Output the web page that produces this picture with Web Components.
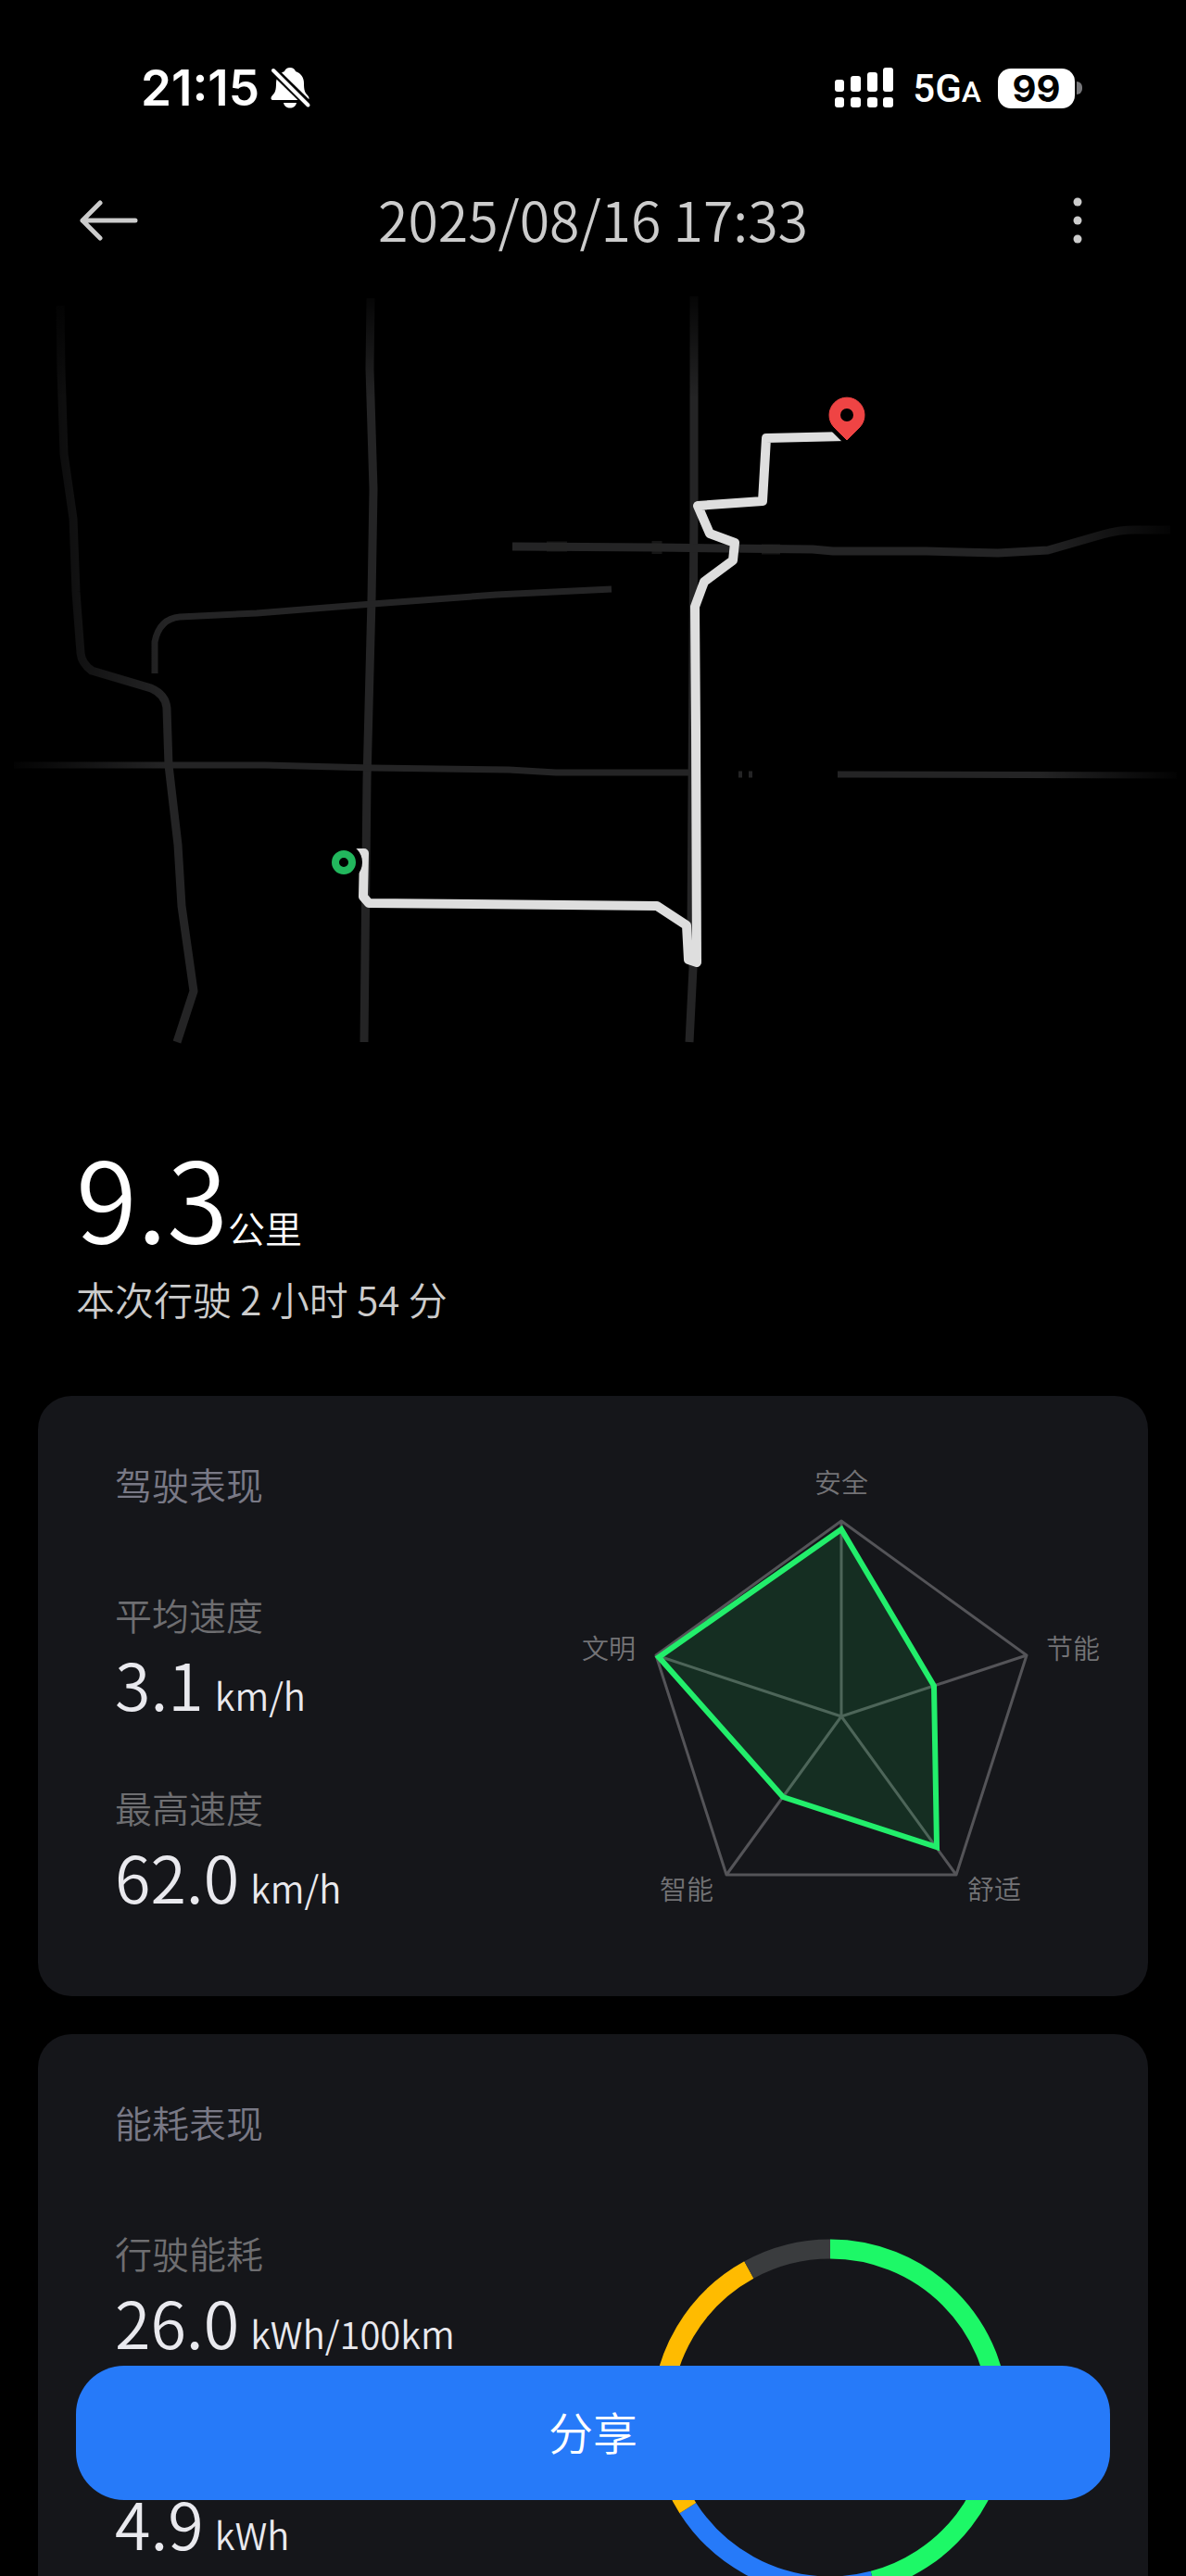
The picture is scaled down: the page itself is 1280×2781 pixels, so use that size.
<!DOCTYPE html>
<html lang="zh-CN">
<head>
<meta charset="utf-8">
<meta name="viewport" content="width=device-width, initial-scale=1">
<title>行程详情</title>
<style>
  :root {
    --bg: #000000;
    --card: #15161a;
    --green: #1df867;
    --blue: #267af9;
    --yellow: #ffbb00;
    --grey: #3a3c3e;
  }
  body {
    margin: 0;
    background: var(--bg);
    color: #ffffff;
    font-family: "Noto Sans CJK SC", sans-serif;
    font-weight: 350;
  }
</style>
</head>
<body>
<trip-page>
  <status-bar slot="top" time="21:15" battery="99"></status-bar>
  <trip-header slot="top">2025/08/16 17:33</trip-header>
  <trip-map></trip-map>
  <trip-summary value="9.3" unit="公里">本次行驶 2 小时 54 分</trip-summary>
  <trip-card heading="驾驶表现">
    <trip-metric label="平均速度" value="3.1" unit="km/h"></trip-metric>
    <trip-metric label="最高速度" value="62.0" unit="km/h"></trip-metric>
    <radar-chart slot="chart"></radar-chart>
  </trip-card>
  <trip-card heading="能耗表现" class="roomy">
    <trip-metric label="行驶能耗" value="26.0" unit="kWh/100km"></trip-metric>
    <trip-metric value="4.9" unit="kWh"></trip-metric>
    <donut-chart slot="chart"></donut-chart>
  </trip-card>
  <share-button slot="action">分享</share-button>
</trip-page>

<script>
// Attaches an open shadow root holding the given markup.
function render(host, html) {
  if (host.shadowRoot) return;
  host.attachShadow({ mode: 'open' }).innerHTML = html;
}

class TripPage extends HTMLElement {
  connectedCallback() {
    render(this, `
      <style>
        :host { display: block; position: relative; height: 100vh; overflow: hidden; }
        main { height: 100%; overflow-y: auto; scrollbar-width: none; }
        .action { position: absolute; left: 82px; right: 82px; bottom: 82px; }
      </style>
      <main>
        <slot name="top"></slot>
        <slot></slot>
      </main>
      <div class="action"><slot name="action"></slot></div>
    `);
  }
}

class StatusBar extends HTMLElement {
  connectedCallback() {
    render(this, `
      <style>
        :host {
          display: flex;
          align-items: center;
          justify-content: space-between;
          height: 190px;
          padding: 0 112px 0 152px;
          box-sizing: border-box;
          font-family: Inter, sans-serif;
        }
        svg { display: block; }
        .side { display: flex; align-items: center; }
        .time { font-size: 53px; font-weight: 600; margin-right: 12px; }
        .signal { margin-right: 20px; }
        .network { font-family: Roboto, sans-serif; font-size: 42px; font-weight: 500; margin-right: 18px; }
        .network small { font-size: 32px; }
        .battery {
          width: 83px;
          height: 43px;
          border-radius: 14px;
          background: #ffffff;
          color: #000000;
          font-size: 40px;
          font-weight: 700;
          line-height: 43px;
          text-align: center;
        }
        .nub { width: 6px; height: 14px; margin-left: 2px; border-radius: 0 6px 6px 0; background: #77777a; }
      </style>
      <div class="side">
        <span class="time">${this.getAttribute('time')}</span>
        <svg width="44" height="46" viewBox="0 0 44 46" aria-hidden="true">
          <path fill="#fff" d="M21 1c-3 0-5 1.500-6 4-6 2-9 7-9 13 0 7-1 10-4 13-1 1-1.500 2-1.500 3.200 0 1.200 1 1.800 2 1.800h37c1.200 0 2-.600 2-1.800 0-1.200-.600-2.200-1.500-3.200-3-3-4-6-4-13 0-6-3-11-9-13-1-2.500-3-4-6-4z"/>
          <path fill="#fff" d="M14 39h14c-1 4-3.500 5.500-7 5.500S15 43 14 39z"/>
          <path stroke="#000" stroke-width="9" d="M1 2l42 41"/>
          <path stroke="#fff" stroke-width="4" stroke-linecap="round" d="M3 4l37.500 37.500"/>
        </svg>
      </div>
      <div class="side">
        <svg class="signal" width="64" height="44" viewBox="0 0 64 44" fill="#fff" aria-hidden="true">
          <rect x="0" y="13" width="10" height="13" rx="3"/>
          <rect x="17" y="9" width="11" height="17" rx="3"/>
          <rect x="35" y="5" width="11" height="21" rx="3"/>
          <rect x="52" y="0" width="11" height="26" rx="3"/>
          <rect x="0" y="32" width="10" height="11" rx="3"/>
          <rect x="17" y="32" width="11" height="11" rx="3"/>
          <rect x="35" y="32" width="11" height="11" rx="3"/>
          <rect x="52" y="32" width="11" height="11" rx="3"/>
        </svg>
        <span class="network">5G<small>A</small></span>
        <span class="battery">${this.getAttribute('battery')}</span>
        <span class="nub"></span>
      </div>
    `);
  }
}

class TripHeader extends HTMLElement {
  connectedCallback() {
    render(this, `
      <style>
        :host {
          display: grid;
          grid-template-columns: 96px 1fr 96px;
          align-items: center;
          height: 96px;
          padding: 0 69px;
          margin-bottom: 14px;
          color: #cccccc;
        }
        h1 {
          margin: 0;
          padding-bottom: 4px;
          font-size: 59px;
          font-weight: inherit;
          line-height: 80px;
          text-align: center;
          white-space: nowrap;
        }
        button {
          width: 96px;
          height: 96px;
          padding: 0;
          border: 0;
          background: none;
          color: inherit;
          cursor: pointer;
        }
        svg { display: block; margin: auto; }
      </style>
      <button aria-label="返回">
        <svg width="64" height="44" viewBox="0 0 64 44" fill="none" stroke="currentColor" stroke-width="5" stroke-linecap="round" stroke-linejoin="round">
          <path d="M61 22H4M23 3L4 22l19 19"/>
        </svg>
      </button>
      <h1><slot></slot></h1>
      <button aria-label="更多">
        <svg width="12" height="52" viewBox="0 0 12 52" fill="currentColor">
          <circle cx="6" cy="6" r="4.500"/>
          <circle cx="6" cy="26" r="4.500"/>
          <circle cx="6" cy="46" r="4.500"/>
        </svg>
      </button>
    `);
  }
}

class TripMap extends HTMLElement {
  connectedCallback() {
    render(this, `
      <style>
        :host { display: block; }
        svg { display: block; width: 100%; }
      </style>
      <svg viewBox="0 0 1280 850" role="img" aria-label="行驶轨迹">
        <defs>
          <linearGradient id="left"><stop offset="0"/><stop offset="1" stop-opacity="0"/></linearGradient>
          <linearGradient id="right"><stop offset="0" stop-opacity="0"/><stop offset="1"/></linearGradient>
          <linearGradient id="top" x2="0" y2="1"><stop offset="0"/><stop offset="1" stop-opacity="0"/></linearGradient>
        </defs>
        <g fill="none" stroke="#242425" stroke-width="9" stroke-linejoin="round">
          <path d="M65 30L66 100 69 190 79 260 82 339 87 405Q88 416 99 424L163 443Q179 450 180 465L182 526 192 612 196 678 209 770 191 825"/>
          <path d="M400 22L399 98 403 228 401 347 396 542 393 825"/>
          <path d="M749 20V249L746 705 748 745 744 825"/>
          <path stroke-width="7" d="M167 427V393Q172 368 194 366L277 362 402 352 536 342 660 336"/>
          <path stroke-width="7" d="M15 526H286L402 529 549 531 600 534H745M904 536L1270 537M797 536H801M808 536H812"/>
          <path d="M553 290L708 291 877 293 899 295 1000 295 1077 297 1131 294 1190 277Q1207 272 1225 272H1263"/>
          <path d="M590 290H612M709 284V298M822 293H842" stroke-width="11" stroke-opacity=".6"/>
        </g>
        <rect width="180" height="850" fill="url(#left)"/>
        <rect x="1120" width="160" height="850" fill="url(#right)"/>
        <rect width="1280" height="130" fill="url(#top)"/>
        <path fill="none" stroke="#dedede" stroke-width="10" stroke-linejoin="round"
          d="M383 621H393L392 668 398 675 709 678 741 699 743 736 752 739 751 488 750 355 760 328 791 305 793 286 766 276 753 246 823 241 827 173 913 171"/>
        <circle cx="371" cy="631" r="20"/>
        <circle cx="371" cy="631" r="9" fill="none" stroke="#22b75d" stroke-width="8"/>
        <path stroke="#000" stroke-width="10" d="M914 175L900 161A19 19 0 1 1 928 161Z"/>
        <path fill="#ef4444" stroke="#ef4444" stroke-width="1" stroke-linejoin="round" d="M914 175L900 161A19 19 0 1 1 928 161Z"/>
        <circle cx="914" cy="148" r="7"/>
      </svg>
    `);
  }
}

class TripSummary extends HTMLElement {
  connectedCallback() {
    render(this, `
      <style>
        :host { display: block; padding: 80px 82px 81px; }
        .total { font-size: 120px; line-height: 120px; white-space: nowrap; }
        small { font-size: 40px; line-height: 40px; }
        p { margin: 28px 0 0; color: #cccccc; font-size: 42px; line-height: 48px; }
      </style>
      <div class="total">${this.getAttribute('value')}<small>${this.getAttribute('unit')}</small></div>
      <p><slot></slot></p>
    `);
  }
}

class TripCard extends HTMLElement {
  connectedCallback() {
    render(this, `
      <style>
        :host {
          display: flex;
          justify-content: space-between;
          align-items: flex-start;
          margin: 0 41px 41px;
          padding: 71px 39px 86px 83px;
          border-radius: 36px;
          background: var(--card);
          --metric-gap: 66px;
        }
        :host(.roomy) { --metric-gap: 75px; }
        h2 { margin: 0 0 93px; color: #797986; font-size: 40px; font-weight: inherit; line-height: 48px; }
        .metrics { display: flex; flex-direction: column; gap: var(--metric-gap); }
        .chart { flex: 0 1 580px; min-width: 0; }
      </style>
      <section>
        <h2>${this.getAttribute('heading')}</h2>
        <div class="metrics"><slot></slot></div>
      </section>
      <div class="chart"><slot name="chart"></slot></div>
    `);
  }
}

class TripMetric extends HTMLElement {
  connectedCallback() {
    render(this, `
      <style>
        :host { display: block; white-space: nowrap; }
        .label { min-height: 48px; color: #6e6e71; font-size: 40px; line-height: 48px; }
        .value { margin-top: 6px; color: #e9e9ee; font-size: 70px; line-height: 88px; }
        small { margin-left: 12px; font-size: 40px; line-height: 40px; }
      </style>
      <div class="label">${this.getAttribute('label') ?? ''}</div>
      <div class="value">${this.getAttribute('value')}<small>${this.getAttribute('unit')}</small></div>
    `);
  }
}

class RadarChart extends HTMLElement {
  connectedCallback() {
    render(this, `
      <style>
        :host { display: block; }
        svg { display: block; width: 100%; }
        text { fill: #737376; font-size: 29px; text-anchor: middle; }
      </style>
      <svg viewBox="0 -2 580 484" role="img" aria-label="驾驶表现雷达图">
        <path fill="none" stroke="#545458" stroke-width="3" stroke-linejoin="round"
          d="M288 62L488 207 412 444H164L88 207ZM288 273V62M288 273L488 207M288 273L412 444M288 273L164 444M288 273L88 207"/>
        <path fill="#1df867" fill-opacity=".11" stroke="#22ee6b" stroke-width="6"
          d="M288 71L388 240 391 414 225 360 91 209Z"/>
        <text x="288" y="32">安全</text>
        <text x="538" y="211">节能</text>
        <text x="453" y="471">舒适</text>
        <text x="121" y="471">智能</text>
        <text x="37" y="211">文明</text>
      </svg>
    `);
  }
}

// Shares run clockwise from twelve o'clock, in percent of the ring.
const SHARES = [
  { color: 'var(--green)', from: 0, size: 45.9 },
  { color: 'var(--blue)', from: 45.9, size: 20.1 },
  { color: 'var(--yellow)', from: 66, size: 26 },
  { color: 'var(--grey)', from: 92, size: 8 },
];

class DonutChart extends HTMLElement {
  connectedCallback() {
    const arcs = SHARES.map(({ color, from, size }) => `
      <circle cx="276" cy="341" r="182" pathLength="100" stroke="${color}"
        stroke-dasharray="${size} ${100 - size}" stroke-dashoffset="${-from}"
        transform="rotate(-90 276 341)"/>`).join('');
    render(this, `
      <style>
        :host { display: block; }
        svg { display: block; width: 100%; }
      </style>
      <svg viewBox="0 -2 580 542" fill="none" stroke-width="21" role="img" aria-label="能耗分布">${arcs}</svg>
    `);
  }
}

class ShareButton extends HTMLElement {
  connectedCallback() {
    render(this, `
      <style>
        :host { display: block; }
        button {
          display: block;
          width: 100%;
          height: 145px;
          padding: 0 0 6px;
          border: 0;
          border-radius: 52px;
          background: var(--blue);
          color: #ffffff;
          font: inherit;
          font-size: 48px;
          cursor: pointer;
        }
      </style>
      <button><slot></slot></button>
    `);
  }
}

customElements.define('trip-page', TripPage);
customElements.define('status-bar', StatusBar);
customElements.define('trip-header', TripHeader);
customElements.define('trip-map', TripMap);
customElements.define('trip-summary', TripSummary);
customElements.define('trip-card', TripCard);
customElements.define('trip-metric', TripMetric);
customElements.define('radar-chart', RadarChart);
customElements.define('donut-chart', DonutChart);
customElements.define('share-button', ShareButton);
</script>
</body>
</html>
